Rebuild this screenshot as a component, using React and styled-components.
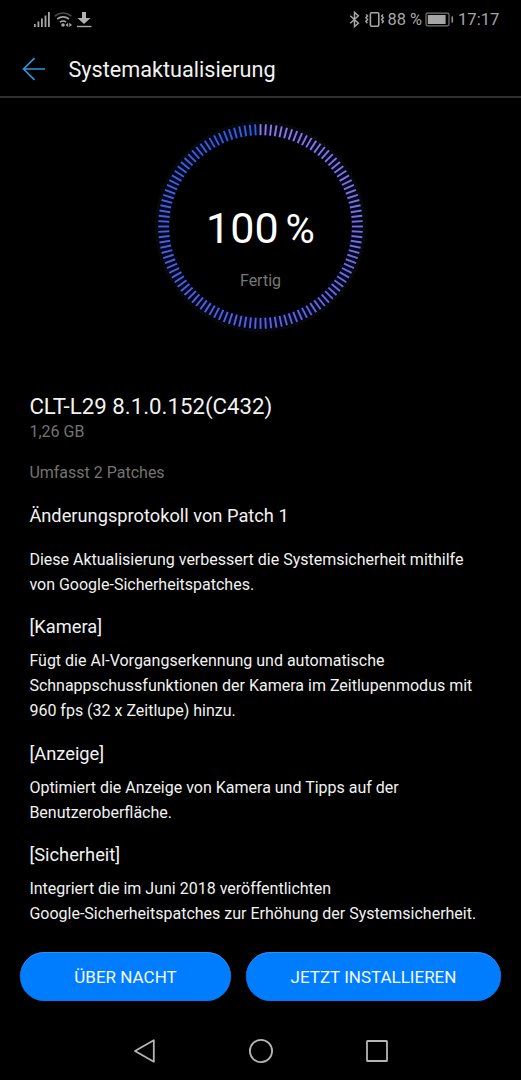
import React from "react";
import styled, { createGlobalStyle } from "styled-components";

const TICKS = 120;

const sections = [
  {
    title: "[Kamera]",
    lines: [
      "Fügt die AI-Vorgangserkennung und automatische",
      "Schnappschussfunktionen der Kamera im Zeitlupenmodus mit",
      "960 fps (32 x Zeitlupe) hinzu.",
    ],
  },
  {
    title: "[Anzeige]",
    lines: [
      "Optimiert die Anzeige von Kamera und Tipps auf der",
      "Benutzeroberfläche.",
    ],
  },
  {
    title: "[Sicherheit]",
    lines: [
      "Integriert die im Juni 2018 veröffentlichten",
      "Google-Sicherheitspatches zur Erhöhung der Systemsicherheit.",
    ],
  },
];

// purple at the top right, running clockwise into blue
const from = [146, 122, 222];
const middle = [84, 100, 220];
const to = [44, 98, 214];

function tickColor(i) {
  const t = i / (TICKS - 1);
  const [a, b, k] = t < 0.5 ? [from, middle, t * 2] : [middle, to, t * 2 - 1];
  return `rgb(${a.map((v, n) => Math.round(v + (b[n] - v) * k)).join(",")})`;
}

function ProgressRing() {
  return (
    <RingSvg viewBox="-110 -110 220 220">
      <circle r="104.5" fill="none" stroke="#070808" strokeWidth="3" />
      <circle r="97" fill="none" stroke="#03031c" strokeWidth="12" />
      {Array.from({ length: TICKS }, (_, i) => (
        <line
          key={i}
          y1="-102.8"
          y2="-91.8"
          stroke={tickColor(i)}
          strokeWidth="1.9"
          transform={`rotate(${i * (360 / TICKS)})`}
        />
      ))}
    </RingSvg>
  );
}

function StatusBar() {
  return (
    <Status>
      <svg width="60" height="18" viewBox="33 11 60 18">
        <g fill="#a6a6a6">
          <rect x="34" y="24" width="1.7" height="3" />
          <rect x="37.5" y="21.5" width="1.8" height="5.5" />
          <rect x="41" y="18.5" width="1.8" height="8.5" />
          <rect x="44.6" y="15.5" width="1.8" height="11.5" />
          <rect x="48" y="12" width="1.8" height="15" />
        </g>
        <g fill="none" strokeWidth="1.6">
          <path d="M54.7 16.2Q63 9.8 71.4 16.2" stroke="#4a4a4a" />
          <path d="M57.2 19Q63 14.8 69 19" stroke="#a6a6a6" />
          <path d="M59.9 22.2Q63 19.8 66 22" stroke="#a6a6a6" />
        </g>
        <circle cx="63" cy="25" r="1.8" fill="#a6a6a6" />
        <path d="M68.2 22.7v4.4L65.5 24.9zM69.3 22.7v4.4L72 24.9z" fill="#a6a6a6" />
        <path d="M82 12h4v6h4.6L84 24l-6.6-6H82z" fill="#b0b0b0" />
        <path d="M77 26.5h14.5" stroke="#a6a6a6" strokeWidth="1.4" />
      </svg>
      <StatusRight>
        <svg width="37" height="18" viewBox="349 11 37 18">
          <g fill="none" stroke="#a6a6a6" strokeWidth="1.5">
            <path d="M350.3 15.7L358.4 23.2L354.5 26.6V12.4L358.4 15.8L350.3 23.3" />
            <rect x="370.4" y="12.7" width="8.4" height="13.6" rx="1.2" strokeWidth="1.6" />
            <path d="M366.2 14.4l1.3 1.6-1.6 1.8 1.6 1.8-1.6 1.8 1.4 1.8M383 14.4l-1.3 1.6 1.6 1.8-1.6 1.8 1.6 1.8-1.4 1.8" />
          </g>
        </svg>
        <Percent>88 %</Percent>
        <svg width="30" height="18" viewBox="424 11 30 18">
          <rect x="426" y="13.2" width="23" height="12.6" rx="1.5" fill="none" stroke="#777" strokeWidth="1.2" />
          <rect x="427.8" y="15" width="17.8" height="9" fill="#a6a6a6" />
          <rect x="451.4" y="16.3" width="1.7" height="6.4" rx=".6" fill="#888" />
        </svg>
        <Clock>17:17</Clock>
      </StatusRight>
    </Status>
  );
}

export default function App() {
  return (
    <Screen>
      <GlobalStyle />
      <StatusBar />
      <Header>
        <svg width="24" height="24" viewBox="0 0 24 24" fill="none" stroke="#2f97dc" strokeWidth="1.7">
          <path d="M23 12H1.6M12.5 1.2L1.6 12L12.5 22.8" />
        </svg>
        <Title>Systemaktualisierung</Title>
      </Header>
      <Progress>
        <ProgressRing />
        <ProgressText>
          <Value>
            100<Unit>%</Unit>
          </Value>
          <State>Fertig</State>
        </ProgressText>
      </Progress>
      <Details>
        <Version>CLT-L29 8.1.0.152(C432)</Version>
        <Muted>1,26 GB</Muted>
        <Patches>Umfasst 2 Patches</Patches>
        <LogTitle>Änderungsprotokoll von Patch 1</LogTitle>
        <Text>
          Diese Aktualisierung verbessert die Systemsicherheit mithilfe
          <br />
          von Google-Sicherheitspatches.
        </Text>
        {sections.map((section) => (
          <section key={section.title}>
            <SectionTitle>{section.title}</SectionTitle>
            <Text>
              {section.lines.map((line) => (
                <div key={line}>{line}</div>
              ))}
            </Text>
          </section>
        ))}
      </Details>
      <Actions>
        <Button $width={211}>ÜBER NACHT</Button>
        <Button $width={255}>JETZT INSTALLIEREN</Button>
      </Actions>
      <NavBar>
        <svg width="24" height="26" viewBox="0 0 24 26">
          <path d="M2 13L20.8 2.2V23.8Z" strokeLinejoin="round" />
        </svg>
        <svg width="26" height="26" viewBox="0 0 26 26">
          <circle cx="13" cy="13" r="11.1" />
        </svg>
        <svg width="24" height="26" viewBox="0 0 24 26">
          <rect x="2" y="3" width="20" height="20" rx=".6" />
        </svg>
      </NavBar>
    </Screen>
  );
}

const GlobalStyle = createGlobalStyle`
  body {
    margin: 0;
    background: #000;
  }
  * {
    box-sizing: border-box;
  }
`;

const Screen = styled.div`
  display: flex;
  flex-direction: column;
  width: 521px;
  height: 1080px;
  overflow: hidden;
  background: #000;
  color: #f2f2f2;
  font-family: Roboto, "Liberation Sans", sans-serif;
  white-space: nowrap;
  svg {
    display: block;
    flex: none;
  }
`;

const Status = styled.div`
  display: flex;
  justify-content: space-between;
  height: 40px;
  padding: 11px 22px 0 33px;
  color: #a6a6a6;
`;

const StatusRight = styled.div`
  display: flex;
  line-height: 18px;
`;

const Percent = styled.span`
  width: 38px;
  padding-left: 1.5px;
  font-size: 16.4px;
`;

const Clock = styled.span`
  width: 45px;
  padding-left: 4px;
  font-size: 16.6px;
`;

const Header = styled.header`
  display: flex;
  align-items: center;
  height: 58px;
  padding: 1px 0 0 22px;
  border-bottom: 2px solid #303030;
`;

const Title = styled.h1`
  margin: 1px 0 0 22.5px;
  font-size: 21.65px;
  font-weight: 400;
`;

const Progress = styled.div`
  display: grid;
  justify-content: center;
  height: 295px;
  padding-top: 19px;
  > * {
    grid-area: 1 / 1;
  }
`;

const RingSvg = styled.svg`
  width: 219px;
  height: 219px;
`;

const ProgressText = styled.div`
  display: flex;
  flex-direction: column;
  align-items: center;
  padding-top: 86px;
`;

const Value = styled.div`
  color: #fff;
  font-size: 43px;
  line-height: 50px;
`;

const Unit = styled.span`
  margin-left: 7px;
  font-size: 40px;
`;

const State = styled.div`
  margin-top: 16px;
  color: #777;
  font-size: 16px;
  line-height: 20px;
`;

const Details = styled.main`
  flex: 1;
  padding-left: 29.4px;
`;

const Version = styled.h2`
  margin: 0 0 2px;
  font-size: 22.25px;
  font-weight: 400;
  line-height: 26px;
`;

const Muted = styled.div`
  color: #737373;
  font-size: 16px;
  line-height: 22px;
`;

const Patches = styled(Muted)`
  margin-top: 19px;
`;

const LogTitle = styled.h3`
  margin: 19px 0 18px;
  font-size: 18.25px;
  font-weight: 400;
  line-height: 26px;
`;

const Text = styled.div`
  font-size: 16px;
  line-height: 25px;
`;

const SectionTitle = styled.h3`
  margin: 17.4px 0 8px;
  font-size: 18.3px;
  font-weight: 400;
  line-height: 26px;
`;

const Actions = styled.div`
  display: flex;
  gap: 15px;
  height: 69px;
  padding-left: 20px;
`;

const Button = styled.button`
  width: ${(p) => p.$width}px;
  height: 49px;
  padding: 0;
  border: 0;
  border-radius: 25px;
  background: #007dff;
  box-shadow: inset 0 1px 0 #2b8ff5;
  color: #f4faff;
  font-family: inherit;
  font-size: 17px;
`;

const NavBar = styled.nav`
  display: flex;
  align-items: center;
  justify-content: center;
  gap: 91px;
  height: 59px;
  svg {
    fill: none;
    stroke: #b5b5b5;
    stroke-width: 1.8;
  }
`;
